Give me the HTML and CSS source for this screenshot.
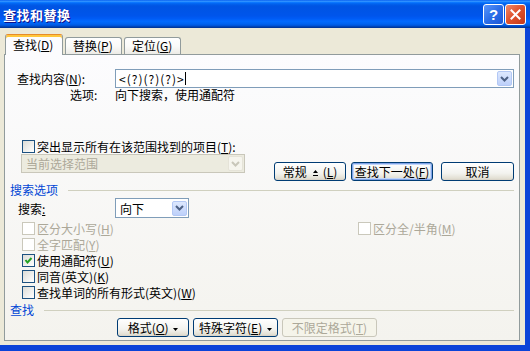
FILE: index.html
```html
<!DOCTYPE html>
<html lang="zh-CN">
<head>
  <meta charset="UTF-8">
  <title>查找和替换</title>
  <link rel="stylesheet" href="styles.css">
</head>
<body>

<div class="window">
  <!-- Заголовок окна -->
  <div class="titlebar">
    <span class="title">查找和替换</span>
    <div class="title-buttons">
      <span class="tbtn help">?</span>
      <span class="tbtn close">
        <svg width="11" height="11" viewBox="0 0 11 11"><path d="M1.5 1.5 L9.5 9.5 M9.5 1.5 L1.5 9.5" stroke="#fff" stroke-width="2" stroke-linecap="square"/></svg>
      </span>
    </div>
  </div>

  <div class="client">
    <!-- Вкладки -->
    <div class="tabs">
      <div class="tab active">查找(<u>D</u>)</div>
      <div class="tab">替换(<u>P</u>)</div>
      <div class="tab">定位(<u>G</u>)</div>
    </div>

    <div class="page">
      <div class="row find-row">
        <span class="lbl">查找内容(<u>N</u>):</span>
        <div class="combo find-combo">
          <span class="combo-text find-text">&lt;(?)(?)(?)&gt;</span><span class="caret"></span>
          <span class="drop"><svg width="9" height="6" viewBox="0 0 9 6"><path d="M1 1 L4.5 4.5 L8 1" fill="none" stroke="#4d6185" stroke-width="2"/></svg></span>
        </div>
      </div>

      <div class="row options-row">
        <span class="lbl lbl-options">选项:</span>
        <span>向下搜索，使用通配符</span>
      </div>

      <div class="check highlight-check"><span class="box"></span>突出显示所有在该范围找到的项目(<u>T</u>):</div>

      <div class="row scope-row">
        <div class="combo scope-combo disabled">
          <span class="combo-text">当前选择范围</span>
          <span class="drop"><svg width="9" height="6" viewBox="0 0 9 6"><path d="M1 1 L4.5 4.5 L8 1" fill="none" stroke="#c9c7ba" stroke-width="2"/></svg></span>
        </div>
        <div class="actions">
          <button class="btn btn-less">常规<svg class="less-icon" width="5" height="6" viewBox="0 0 5 6"><path d="M0 3 L2.5 0 L5 3 Z M0 5 H5 V6 H0 Z" fill="#000"/></svg>(<u>L</u>)</button>
          <button class="btn btn-next default">查找下一处(<u>F</u>)</button>
          <button class="btn btn-cancel">取消</button>
        </div>
      </div>

      <!-- Параметры поиска -->
      <div class="group-title">搜索选项</div>

      <div class="row search-row">
        <span class="lbl lbl-search">搜索<u>:</u></span>
        <div class="combo dir-combo">
          <span class="combo-text">向下</span>
          <span class="drop"><svg width="9" height="6" viewBox="0 0 9 6"><path d="M1 1 L4.5 4.5 L8 1" fill="none" stroke="#4d6185" stroke-width="2"/></svg></span>
        </div>
      </div>

      <div class="row check-row first-check-row">
        <div class="check disabled col-left"><span class="box"></span>区分大小写(<u>H</u>)</div>
        <div class="check disabled col-right"><span class="box"></span>区分全/半角(<u>M</u>)</div>
      </div>
      <div class="row check-row">
        <div class="check disabled"><span class="box"></span>全字匹配(<u>Y</u>)</div>
      </div>
      <div class="row check-row">
        <div class="check"><span class="box checked"><svg width="11" height="11" viewBox="0 0 11 11"><path d="M2.5 5 L4.5 7.5 L8.5 3" fill="none" stroke="#21a121" stroke-width="2"/></svg></span>使用通配符(<u>U</u>)</div>
      </div>
      <div class="row check-row">
        <div class="check"><span class="box"></span>同音(英文)(<u>K</u>)</div>
      </div>
      <div class="row check-row">
        <div class="check"><span class="box"></span>查找单词的所有形式(英文)(<u>W</u>)</div>
      </div>

      <div class="group-title">查找</div>

      <div class="row bottom-buttons">
        <button class="btn btn-format">格式(<u>O</u>) <svg class="drop-tri" width="5" height="3" viewBox="0 0 5 3"><path d="M0 0 H5 L2.5 3 Z" fill="#000"/></svg></button>
        <button class="btn btn-special">特殊字符(<u>E</u>) <svg class="drop-tri" width="5" height="3" viewBox="0 0 5 3"><path d="M0 0 H5 L2.5 3 Z" fill="#000"/></svg></button>
        <button class="btn btn-noformat" disabled>不限定格式(<u>T</u>)</button>
      </div>
    </div>
  </div>
</div>

</body>
</html>
```

FILE: styles.css
```css
/* Общий стиль */
* {
  box-sizing: border-box;
}

body {
  margin: 0;
  font-family: "Noto Sans CJK SC", "Liberation Sans", sans-serif;
  font-size: 12px;
  color: #000;
  background-color: #ece9d8;
  overflow: hidden;
}

u {
  text-decoration: underline;
}

.window {
  width: 530px;
  height: 351px;
  display: flex;
  flex-direction: column;
}

/* Заголовок */
.titlebar {
  height: 28px;
  flex: none;
  display: flex;
  align-items: center;
  justify-content: space-between;
  padding: 0 4px 0 3px;
  background: linear-gradient(to bottom, #0058ee 0%, #3593ff 4%, #288eff 6%, #127dff 8%, #036ffc 10%, #0262ee 14%, #0057e5 20%, #0054e3 24%, #0055eb 56%, #005bf5 66%, #026afe 76%, #0062ef 86%, #0052d6 92%, #0040ab 96%, #003092 100%);
}

.title {
  color: #ffffff;
  font-weight: bold;
  font-size: 13px;
  letter-spacing: 0.5px;
  text-shadow: 1px 1px #0f1089;
}

.title-buttons {
  display: flex;
  gap: 1px;
}

.tbtn {
  width: 21px;
  height: 21px;
  display: flex;
  align-items: center;
  justify-content: center;
  border: 1px solid #ffffff;
  border-radius: 3px;
  color: #ffffff;
  font-family: "Liberation Sans", sans-serif;
  font-weight: bold;
  font-size: 15px;
}

.help {
  background: linear-gradient(135deg, #5a96fb 0%, #2c6ee8 50%, #1c56d6 100%);
}

.close {
  background: linear-gradient(135deg, #ee8a6c 0%, #e0542f 45%, #c4391a 100%);
}

/* Рабочая область */
.client {
  flex: 1;
  padding: 6px 0 0 4px;
  border-right: 5px solid #0b44d8;
  border-bottom: 6px solid #0b44d8;
}

/* Вкладки */
.tabs {
  height: 20px;
  display: flex;
  align-items: flex-end;
  padding-left: 1px;
}

.tab {
  height: 17px;
  width: 57px;
  margin-left: 2px;
  padding-left: 7px;
  line-height: 16px;
  border: 1px solid #919b9c;
  border-bottom: none;
  border-radius: 3px 3px 0 0;
  background: linear-gradient(to bottom, #ffffff, #fbfbf9 50%, #ecebe6);
}

.tab.active {
  position: relative;
  z-index: 1;
  height: 21px;
  width: 58px;
  margin-left: 0;
  margin-bottom: -1px;
  line-height: 19px;
  border-top: 1px solid #e68b2c;
  box-shadow: inset 0 2px #ffc73c;
  background: #fcfcfe;
}

.page {
  height: 287px;
  width: 516px;
  padding: 0 5px 0 0;
  border: 1px solid #919b9c;
  background: linear-gradient(to bottom, #fcfcfe, #f4f3ee);
}

.row {
  display: flex;
  align-items: flex-start;
}

.lbl {
  width: 110px;
  flex: none;
  padding-left: 12px;
}

/* Поле поиска */
.find-row {
  margin-top: 14px;
  align-items: center;
}

.combo {
  height: 19px;
  display: flex;
  align-items: center;
  padding-left: 3px;
  border: 1px solid #7f9db9;
  background-color: #ffffff;
}

.find-combo {
  flex: 1;
}

.find-text {
  letter-spacing: 1px;
}

.caret {
  width: 1px;
  height: 13px;
  background-color: #000;
}

.drop {
  width: 15px;
  height: 15px;
  margin-left: auto;
  margin-right: 1px;
  display: flex;
  align-items: center;
  justify-content: center;
  border: 1px solid #b3c8f5;
  border-radius: 2px;
  background: linear-gradient(to bottom, #dde8fe, #bdd0fa);
}

.options-row {
  margin-top: 1px;
  line-height: 12px;
}

.lbl-options {
  padding-left: 65px;
}

/* Флажки */
.check {
  display: flex;
  align-items: center;
  height: 13px;
  padding-left: 17px;
  white-space: nowrap;
}

.box {
  width: 13px;
  height: 13px;
  flex: none;
  margin-right: 2px;
  display: flex;
  align-items: center;
  justify-content: center;
  border: 1px solid #1c5180;
  background: linear-gradient(135deg, #dcdcd7, #ffffff);
}

.check.disabled {
  color: #aca899;
}

.check.disabled .box {
  border-color: #cac8bb;
  background: #ffffff;
}

.highlight-check {
  margin-top: 39px;
}

.scope-row {
  margin-top: 1px;
}

.scope-combo {
  width: 224px;
  margin-left: 16px;
  padding-left: 4px;
  border-color: #c9c7ba;
  background-color: #ecebdf;
  color: #aca899;
}

.scope-combo .drop {
  border-color: #e5e3d8;
  background: #f6f5ee;
}

.actions {
  margin-left: auto;
  margin-top: 8px;
  display: flex;
}

/* Кнопки */
.btn {
  height: 19px;
  padding: 0;
  font-family: inherit;
  font-size: 12px;
  line-height: 16px;
  text-align: center;
  color: #000;
  border: 1px solid #003c74;
  border-radius: 3px;
  background: linear-gradient(to bottom, #ffffff, #f3f3ef 60%, #e3e0d4 90%, #d6d0c5);
  white-space: nowrap;
}

.btn.default {
  box-shadow: inset 0 0 0 1px #7fa3e8, inset 0 0 0 2px #c2d6f9;
}

.btn:disabled {
  border-color: #c9c7ba;
  background: #f5f4ea;
  color: #aca899;
}

.btn-less {
  width: 72px;
}

.less-icon {
  vertical-align: 1px;
  margin: 0 5px 0 6px;
}

.drop-tri {
  vertical-align: 2px;
  margin-left: 2px;
}

.btn-next {
  width: 82px;
  margin-left: 5px;
}

.btn-cancel {
  width: 73px;
  margin-left: 8px;
}

/* Группы */
.group-title {
  display: flex;
  align-items: center;
  margin-top: 3px;
  padding-left: 5px;
  line-height: 12px;
  color: #0046d5;
}

.group-title::after {
  content: "";
  flex: 1;
  height: 1px;
  margin-left: 10px;
  background-color: #d0d0bf;
}

.search-row {
  margin-top: 2px;
  align-items: center;
}

.lbl-search {
  padding-left: 13px;
}

.dir-combo {
  width: 74px;
  height: 20px;
  padding-left: 4px;
}

.first-check-row {
  margin-top: 3px;
}

.check-row {
  height: 16px;
  padding-top: 1px;
}

.col-left {
  width: 353px;
}

.col-right {
  padding-left: 0;
}

.bottom-buttons {
  margin-top: 2px;
  padding-left: 112px;
  gap: 4px;
}

.btn-format {
  width: 72px;
}

.btn-special {
  width: 85px;
}

.btn-noformat {
  width: 95px;
}
```
